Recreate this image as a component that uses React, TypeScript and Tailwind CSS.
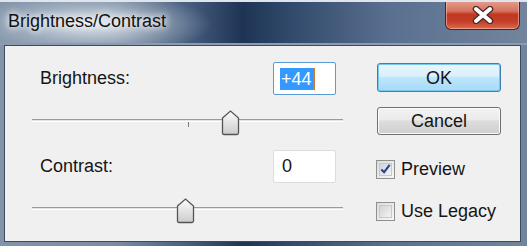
import React from "react";

const font = { fontFamily: '"Liberation Sans", Arial, sans-serif' };

function Slider({ thumb, tick }: { thumb: number; tick?: number }) {
  return (
    <div className="relative h-[25px] w-[311px]">
      <div className="absolute left-0 right-0 top-[9px] h-[3px] border-t border-[#9a9a9a] bg-[#e4e4e4] border-b border-b-white" />
      {tick !== undefined && (
        <div className="absolute top-[12px] h-[5px] w-px bg-[#7a7a7a]" style={{ left: tick }} />
      )}
      <svg className="absolute top-0" style={{ left: thumb }} width="19" height="26" viewBox="0 0 19 26">
        <defs>
          <linearGradient id={`tg${thumb}`} x1="0" x2="0" y1="0" y2="1">
            <stop offset="0" stopColor="#fbfbfb" />
            <stop offset="0.5" stopColor="#e4e4e4" />
            <stop offset="1" stopColor="#cbcbcb" />
          </linearGradient>
        </defs>
        <path d="M1.5 8 L9.5 1 L17.5 8 L17.5 23 Q17.5 24.5 16 24.5 L3 24.5 Q1.5 24.5 1.5 23 Z" fill={`url(#tg${thumb})`} stroke="#555" strokeWidth="1.3" />
      </svg>
    </div>
  );
}

function Checkbox({ checked, label }: { checked?: boolean; label: string }) {
  return (
    <div className="flex items-center gap-[6px] h-[20px]">
      <div className="w-[19px] h-[19px] border border-[#8e8f8f] bg-[linear-gradient(135deg,#dcdcdc,#f8f8f8)] p-[2px]">
        <div className="w-full h-full border border-[#c8c8c8] bg-[linear-gradient(135deg,#cfd3d8,#f4f4f4)] flex items-center justify-center">
          {checked && (
            <svg width="12" height="12" viewBox="0 0 12 12">
              <path d="M1.5 6.5 L4.5 9.5 L10.5 1.5" fill="none" stroke="#2a3d8f" strokeWidth="2.2" />
            </svg>
          )}
        </div>
      </div>
      <span className="text-[18px] text-[#151515] leading-none">{label}</span>
    </div>
  );
}

export default function App() {
  return (
    <div
      className="w-[527px] h-[246px] flex flex-col overflow-hidden border-t-2 border-[#dfe5ec] bg-[radial-gradient(ellipse_120px_32px_at_92px_22px,rgba(228,233,239,0.95),rgba(200,210,222,0.4)_60%,transparent),linear-gradient(90deg,#8394a9_0%,#7a8ca3_22%,#455c7c_36%,#1d3455_46%,#334b6c_56%,#5a7090_74%,#72859c_100%)]"
      style={font}
    >
      <div className="h-[41px] flex items-start justify-between shrink-0">
        <span className="ml-[8px] mt-[10px] text-[18px] text-[#121212] leading-none [text-shadow:0_0_6px_#fff,0_0_10px_#fff]">
          Brightness/Contrast
        </span>
        <div className="mr-[7px] -mt-[2px] w-[75px] h-[30px] rounded-b-[6px] border border-t-0 border-[#4a2420] bg-[linear-gradient(180deg,#e7a394_0%,#d5725e_38%,#c1371f_50%,#c4402a_75%,#df6a4c_100%)] flex items-center justify-center shadow-[inset_0_0_0_1px_rgba(255,210,200,0.5)]">
          <svg width="24" height="18" viewBox="0 0 24 18">
            <path d="M5 3 L19 15 M19 3 L5 15" stroke="#4a2a26" strokeWidth="6.5" strokeLinecap="round" />
            <path d="M5 3 L19 15 M19 3 L5 15" stroke="#ffffff" strokeWidth="4" strokeLinecap="round" />
          </svg>
        </div>
      </div>
      <div className="h-[2px] bg-[#8c9cb0] shrink-0" />
      <div className="mx-[4px] mr-[6px] h-[197px] border border-[#3c4b5f] bg-[#f0f0f0] flex shrink-0">
        <div className="ml-[27px] w-[311px] flex flex-col">
          <div className="mt-[16px] h-[33px] flex items-center justify-between">
            <span className="ml-[8px] text-[18px] text-[#151515]">Brightness:</span>
            <div className="mr-[7px] w-[63px] h-[33px] border border-[#5a9ad6] rounded-[2px] bg-white flex items-center pl-[6px]">
              <span className="bg-[#3399ff] text-white text-[18px] leading-[22px] px-px">+44</span>
              <span className="w-[2px] h-[22px] bg-[#d07a2a]" />
            </div>
          </div>
          <div className="mt-[15px]">
            <Slider thumb={189} tick={156} />
          </div>
          <div className="mt-[15px] h-[33px] flex items-center justify-between">
            <span className="ml-[8px] text-[18px] text-[#151515]">Contrast:</span>
            <div className="mr-[7px] w-[63px] h-[33px] border border-[#dcdcdc] rounded-[2px] bg-white flex items-center pl-[8px]">
              <span className="text-[18px] text-[#151515]">0</span>
            </div>
          </div>
          <div className="mt-[15px]">
            <Slider thumb={144} />
          </div>
        </div>
        <div className="ml-[34px] w-[124px] flex flex-col">
          <button className="mt-[17px] h-[29px] rounded-[3px] border border-[#3c7fb1] bg-[linear-gradient(180deg,#eaf6fd_0%,#d9f0fc_45%,#bee6fd_50%,#a7d9f5_100%)] shadow-[inset_0_0_0_1px_#76c8ec] text-[18px] text-[#151515] leading-none">
            OK
          </button>
          <button className="mt-[15px] h-[28px] rounded-[3px] border border-[#707070] bg-[linear-gradient(180deg,#f2f2f2_0%,#ebebeb_45%,#dddddd_50%,#cfcfcf_100%)] shadow-[inset_0_0_0_1px_#fbfbfb] text-[18px] text-[#151515] leading-none">
            Cancel
          </button>
          <div className="mt-[24px] -ml-px">
            <Checkbox checked label="Preview" />
          </div>
          <div className="mt-[22px] -ml-px">
            <Checkbox label="Use Legacy" />
          </div>
        </div>
      </div>
    </div>
  );
}
